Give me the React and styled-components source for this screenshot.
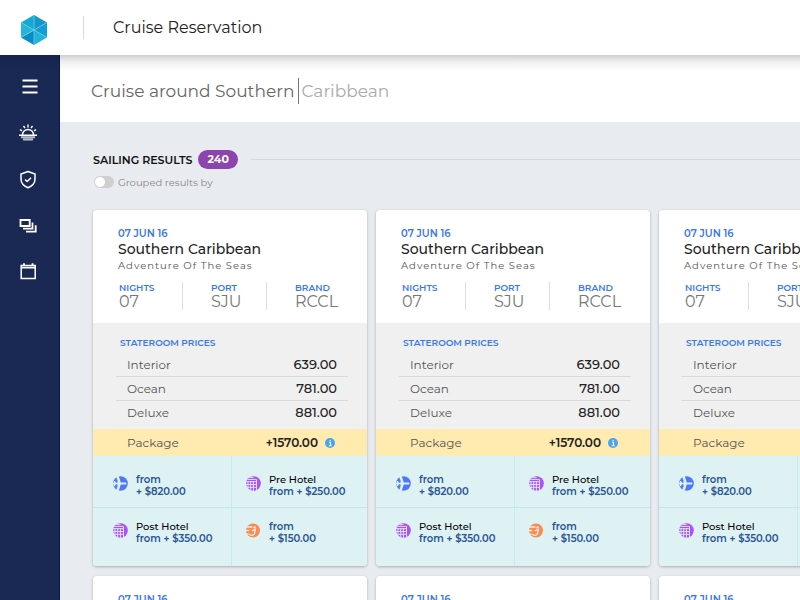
import React, { useState } from 'react';
import styled, { createGlobalStyle, css } from 'styled-components';

const GlobalStyle = createGlobalStyle`
  *, *::before, *::after {
    box-sizing: border-box;
  }
  body {
    margin: 0;
    font-family: Montserrat, Inter, "Open Sans", sans-serif;
    color: #222;
    background: #e8ebf0;
  }
  button, input {
    font: inherit;
    color: inherit;
  }
`;

const Page = styled.div`
  display: grid;
  grid-template-rows: 55px 1fr;
  height: 100vh;
  overflow: hidden;
`;

const Header = styled.header`
  display: flex;
  align-items: center;
  padding-left: 20px;
  background: #fff;
`;

const Logo = styled.svg`
  display: block;
  width: 28px;
  height: 32px;
  margin-top: 4px;
`;

const HeaderDivider = styled.span`
  width: 1px;
  height: 23px;
  margin: 0 29px 0 35px;
  background: #d9d9d9;
`;

const PageTitle = styled.h1`
  margin: 0;
  font-size: 16px;
  font-weight: 400;
  line-height: 21px;
`;

const Body = styled.div`
  display: grid;
  grid-template-columns: 60px 1fr;
  min-height: 0;
`;

const Sidebar = styled.nav`
  display: flex;
  flex-direction: column;
  align-items: center;
  gap: 22px;
  padding: 20px 4px 0 0;
  background: linear-gradient(#16234c, #1a2954 14px);
  border-right: 1px solid #0c1a4b;
`;

const NavButton = styled.button`
  display: grid;
  place-items: center;
  width: 32px;
  height: 24px;
  padding: 0;
  border: 0;
  color: #fff;
  background: none;
  cursor: pointer;
  svg {
    display: block;
    width: 20px;
    height: 20px;
  }
`;

const Main = styled.main`
  display: grid;
  grid-template-rows: 67px 1fr;
  min-width: 0;
  min-height: 0;
`;

const SearchBar = styled.form`
  display: flex;
  align-items: center;
  padding: 4px 31px 0;
  font-size: 17px;
  line-height: 26px;
  background: linear-gradient(#d0d0d0, #f0f0f0 7px, #fff 16px);
`;

const SearchInput = styled.input`
  field-sizing: content;
  padding: 0 4px 0 0;
  border: 0;
  outline: 0;
  color: #666;
  background: none;
`;

const Suggestion = styled.span`
  padding-left: 2px;
  border-left: 1px solid #777;
  color: #aaa;
`;

const Results = styled.section`
  padding: 28px 0 0 33px;
  overflow: hidden;
`;

const ResultsHeader = styled.div`
  display: flex;
  align-items: center;
  height: 19px;
`;

const ResultsTitle = styled.h2`
  margin: 0;
  font-size: 11px;
  font-weight: 600;
  color: #111;
`;

const Count = styled.span`
  margin-left: 6px;
  padding: 0 9px;
  border-radius: 10px;
  font-size: 11px;
  font-weight: 700;
  line-height: 19px;
  color: #fff;
  background: #8e44ad;
`;

const Rule = styled.span`
  flex: 1;
  height: 1px;
  margin-left: 13px;
  background: #d5d8dc;
`;

const Toggle = styled.label`
  display: flex;
  align-items: center;
  gap: 4px;
  width: max-content;
  height: 14px;
  margin: 6px 0 21px 1px;
  font-size: 10px;
  color: #888;
  cursor: pointer;
`;

const ToggleInput = styled.input`
  display: flex;
  align-items: center;
  appearance: none;
  width: 20px;
  height: 12px;
  margin: 0;
  padding: 0 1px;
  border-radius: 6px;
  background: #cfcfcf;
  &::before {
    content: '';
    width: 10px;
    height: 10px;
    border-radius: 50%;
    background: #fff;
  }
  &:checked {
    justify-content: flex-end;
    background: #8e44ad;
  }
`;

const Cards = styled.div`
  display: grid;
  grid-template-rows: auto auto;
  grid-auto-flow: column;
  grid-auto-columns: 274px;
  gap: 10px 9px;
`;

const CardWrapper = styled.article`
  border-radius: 4px;
  background: #fff;
  box-shadow: 0 1px 3px rgba(0, 0, 0, 0.28);
  overflow: hidden;
`;

const Summary = styled.header`
  padding: 18px 0 13px 25px;
`;

const label = css`
  font-weight: 600;
  line-height: 12px;
  color: #3b78e7;
`;

const SailDate = styled.div`
  ${label}
  font-size: 10px;
`;

const CardTitle = styled.h3`
  margin: 0;
  font-size: 14px;
  font-weight: 500;
  line-height: 19px;
`;

const Ship = styled.div`
  font-size: 10px;
  line-height: 14px;
  letter-spacing: 1px;
  color: #555;
`;

const Facts = styled.dl`
  display: grid;
  grid-template-columns: 64px 84px 1fr;
  margin: 9px 0 0;
`;

const Fact = styled.div`
  padding-left: 28px;
  border-left: 1px solid #ddd;
  &:first-child {
    padding-left: 1px;
    border-left: 0;
  }
`;

const FactLabel = styled.dt`
  ${label}
  font-size: 9px;
`;

const FactValue = styled.dd`
  margin: 0;
  font-size: 16px;
  line-height: 16px;
  color: #777;
`;

const Prices = styled.section`
  padding: 14px 19px 5px 23px;
  background: #f0f0f0;
`;

const PricesTitle = styled.h4`
  ${label}
  margin: 0 0 4px 4px;
  font-size: 9px;
`;

const PriceTable = styled.table`
  width: 100%;
  border-collapse: collapse;
  font-size: 12px;
  line-height: 23px;
  tr + tr {
    border-top: 1px solid #d9d9d9;
  }
  th {
    padding: 0 0 0 11px;
    font-weight: 400;
    text-align: left;
    color: #555;
  }
  td {
    padding: 0 11px 0 0;
    font-size: 13px;
    font-weight: 500;
    text-align: right;
  }
`;

const Package = styled.div`
  display: flex;
  align-items: center;
  justify-content: space-between;
  height: 27px;
  padding: 0 32px 0 34px;
  font-size: 12px;
  color: #555;
  background: #ffeab0;
`;

const PackagePrice = styled.strong`
  display: flex;
  align-items: center;
  gap: 7px;
  font-weight: 600;
  color: #222;
`;

const InfoButton = styled.button`
  width: 10px;
  height: 10px;
  padding: 0;
  border: 0;
  background: none;
  cursor: pointer;
  svg {
    display: block;
  }
`;

const Extras = styled.div`
  display: grid;
  grid-template-columns: 138px 1fr;
  grid-template-rows: 52px 58px;
  background: #def1f3;
`;

const Extra = styled.div`
  display: flex;
  gap: 8px;
  padding: ${props => (props.$last ? '13px' : '18px')} 0 0 ${props => (props.$right ? '14px' : '20px')};
  border-left: ${props => (props.$right ? '1px solid #c8eaea' : '0')};
  border-bottom: ${props => (props.$last ? '0' : '1px solid #c0e7e8')};
  svg {
    flex: none;
    width: 15px;
    height: 15px;
    margin-top: 2px;
  }
`;

const ExtraText = styled.div`
  font-size: 10px;
  font-weight: 600;
  line-height: 12px;
  color: #285394;
`;

const ExtraName = styled.div`
  font-weight: 500;
  color: #000;
`;

const MenuIcon = () => (
  <svg viewBox="0 0 20 20" stroke="currentColor" strokeWidth="1.9">
    <path d="M4.5 3.5h15M4.5 9.5h15M4.5 15.5h15" />
  </svg>
);

const SunriseIcon = () => (
  <svg viewBox="0 0 20 20" fill="none" stroke="currentColor" strokeWidth="1.4">
    <path d="M4.5 12a5.5 5.5 0 0 1 11 0M10 1.5v3M5.5 3l1.5 2.2M14.5 3L13 5.2M2 6.5l2 1.4M18 6.5l-2 1.4M1 12.2h18" />
    <path d="M3 14.3h14M5 16.5h10" strokeWidth="2" opacity=".7" />
  </svg>
);

const ShieldIcon = () => (
  <svg viewBox="0 0 20 20" fill="none" stroke="currentColor" strokeWidth="1.5" strokeLinejoin="round">
    <path d="M10 2.5l7 2.5v5c0 4.2-2.7 7-7 8.7-4.3-1.7-7-4.5-7-8.7V5z" />
    <path d="M7 10.5l2.2 2L13 8.8" />
  </svg>
);

const LayersIcon = () => (
  <svg viewBox="0 0 20 20" fill="none" stroke="currentColor" strokeWidth="1.8">
    <path d="M2.5 5h9.2v6H2.5z" />
    <path d="M5 13.7h9.5V7.5M8 16.7h9.7v-6.5" />
  </svg>
);

const CalendarIcon = () => (
  <svg viewBox="0 0 20 20" fill="none" stroke="currentColor" strokeWidth="1.5">
    <path d="M3.2 4.5h14v13h-14z" />
    <path d="M3.2 6.7h14M6 2.2V4.8M14.5 2.2V4.8" strokeWidth="1.8" />
  </svg>
);

const InfoIcon = () => (
  <svg width="10" height="10" viewBox="0 0 10 10">
    <circle cx="5" cy="5" r="5" fill="#4aa3f0" />
    <path d="M4 4.2h1.5V8M3.8 7.7h2.7M4.6 2.5h1.1" stroke="#fff" strokeWidth="1.1" fill="none" />
  </svg>
);

const PlaneIcon = () => (
  <svg viewBox="0 0 15 15">
    <circle cx="7.5" cy="7.5" r="7.3" fill="#4d78f8" />
    <path
      fill="#def1f3"
      d="M0 6.7h1V5h1l1 1.7h1.5V0h1.2l2.1 6.5h5q1.8 1 0 2h-5L5.7 15H4.5V8.3H3L2 10H1V8.3H0z"
    />
    <path fill="#def1f3" d="M3.3 0h1.9v3.8H4zM3.3 15h1.9v-3.8H4z" />
  </svg>
);

const HotelIcon = () => (
  <svg viewBox="0 0 15 15">
    <circle cx="7.5" cy="7.5" r="7.3" fill="#ad50f8" />
    <path
      fill="none"
      stroke="#def1f3"
      strokeWidth=".9"
      d="M2 5v10M4.7 5v10M7.4 5v10M10.5 3.5v11M0 5.7h10.5M0 8.5h10.5M0 11.3h10.5M1.5 3.4h9M3.5 1.6h4"
    />
  </svg>
);

const TourIcon = () => (
  <svg viewBox="0 0 15 15">
    <circle cx="7" cy="7.5" r="7" fill="#fa8b4f" />
    <path
      fill="none"
      stroke="#def1f3"
      strokeWidth="1.3"
      d="M0 4h6.5M0 11.2h2.5M2.8 11q3.5 2.8 5.7-.3l.8-4.2-3.5 1.3M0 7.5h3.2"
    />
    <circle cx="8.6" cy="4.4" r="1.2" fill="#def1f3" />
  </svg>
);

const navItems = [
  { name: 'Menu', Icon: MenuIcon },
  { name: 'Cruises', Icon: SunriseIcon },
  { name: 'Insurance', Icon: ShieldIcon },
  { name: 'Bookings', Icon: LayersIcon },
  { name: 'Calendar', Icon: CalendarIcon }
];

const facts = [
  ['NIGHTS', '07'],
  ['PORT', 'SJU'],
  ['BRAND', 'RCCL']
];

const rooms = [
  ['Interior', '639.00'],
  ['Ocean', '781.00'],
  ['Deluxe', '881.00']
];

const extras = [
  { Icon: PlaneIcon, price: '$820.00' },
  { Icon: HotelIcon, name: 'Pre Hotel', price: '$250.00' },
  { Icon: HotelIcon, name: 'Post Hotel', price: '$350.00' },
  { Icon: TourIcon, price: '$150.00' }
];

const Card = () => (
  <CardWrapper>
    <Summary>
      <SailDate>07 JUN 16</SailDate>
      <CardTitle>Southern Caribbean</CardTitle>
      <Ship>Adventure Of The Seas</Ship>
      <Facts>
        {facts.map(([name, value]) => (
          <Fact key={name}>
            <FactLabel>{name}</FactLabel>
            <FactValue>{value}</FactValue>
          </Fact>
        ))}
      </Facts>
    </Summary>
    <Prices>
      <PricesTitle>STATEROOM PRICES</PricesTitle>
      <PriceTable>
        <tbody>
          {rooms.map(([name, price]) => (
            <tr key={name}>
              <th scope="row">{name}</th>
              <td>{price}</td>
            </tr>
          ))}
        </tbody>
      </PriceTable>
    </Prices>
    <Package>
      <span>Package</span>
      <PackagePrice>
        +1570.00
        <InfoButton type="button" aria-label="Package details">
          <InfoIcon />
        </InfoButton>
      </PackagePrice>
    </Package>
    <Extras>
      {extras.map(({ Icon, name, price }, i) => (
        <Extra key={price} $right={i % 2 === 1} $last={i > 1}>
          <Icon />
          <ExtraText>
            {name ? (
              <>
                <ExtraName>{name}</ExtraName>
                from + {price}
              </>
            ) : (
              <>
                from
                <br />+ {price}
              </>
            )}
          </ExtraText>
        </Extra>
      ))}
    </Extras>
  </CardWrapper>
);

const App = () => {
  const [query, setQuery] = useState('Cruise around Southern');
  const [grouped, setGrouped] = useState(false);

  return (
    <Page>
      <GlobalStyle />
      <Header>
        <Logo viewBox="0 0 28 32" role="img" aria-label="Home">
          <path d="M14 1l13 7.5L14 16z" fill="#1795cc" />
          <path d="M27 8.5v15L14 16z" fill="#129dd3" />
          <path d="M27 23.5L14 31V16z" fill="#22b4d8" />
          <path d="M14 31L1 23.5 14 16z" fill="#078cc6" />
          <path d="M1 23.5v-15L14 16z" fill="#24b5d9" />
          <path d="M1 8.5L14 1v15z" fill="#16a9d0" />
          <path d="M14 1v30M1 8.5l26 15M27 8.5l-26 15" stroke="#6bcbe5" strokeWidth=".8" />
        </Logo>
        <HeaderDivider />
        <PageTitle>Cruise Reservation</PageTitle>
      </Header>
      <Body>
        <Sidebar>
          {navItems.map(({ name, Icon }) => (
            <NavButton key={name} type="button" aria-label={name}>
              <Icon />
            </NavButton>
          ))}
        </Sidebar>
        <Main>
          <SearchBar onSubmit={e => e.preventDefault()}>
            <SearchInput
              aria-label="Search cruises"
              value={query}
              onChange={e => setQuery(e.target.value)}
            />
            <Suggestion>Caribbean</Suggestion>
          </SearchBar>
          <Results>
            <ResultsHeader>
              <ResultsTitle>SAILING RESULTS</ResultsTitle>
              <Count>240</Count>
              <Rule />
            </ResultsHeader>
            <Toggle>
              <ToggleInput
                type="checkbox"
                checked={grouped}
                onChange={e => setGrouped(e.target.checked)}
              />
              Grouped results by
            </Toggle>
            <Cards>
              {[1, 2, 3, 4, 5, 6].map(id => (
                <Card key={id} />
              ))}
            </Cards>
          </Results>
        </Main>
      </Body>
    </Page>
  );
};

export default App;
